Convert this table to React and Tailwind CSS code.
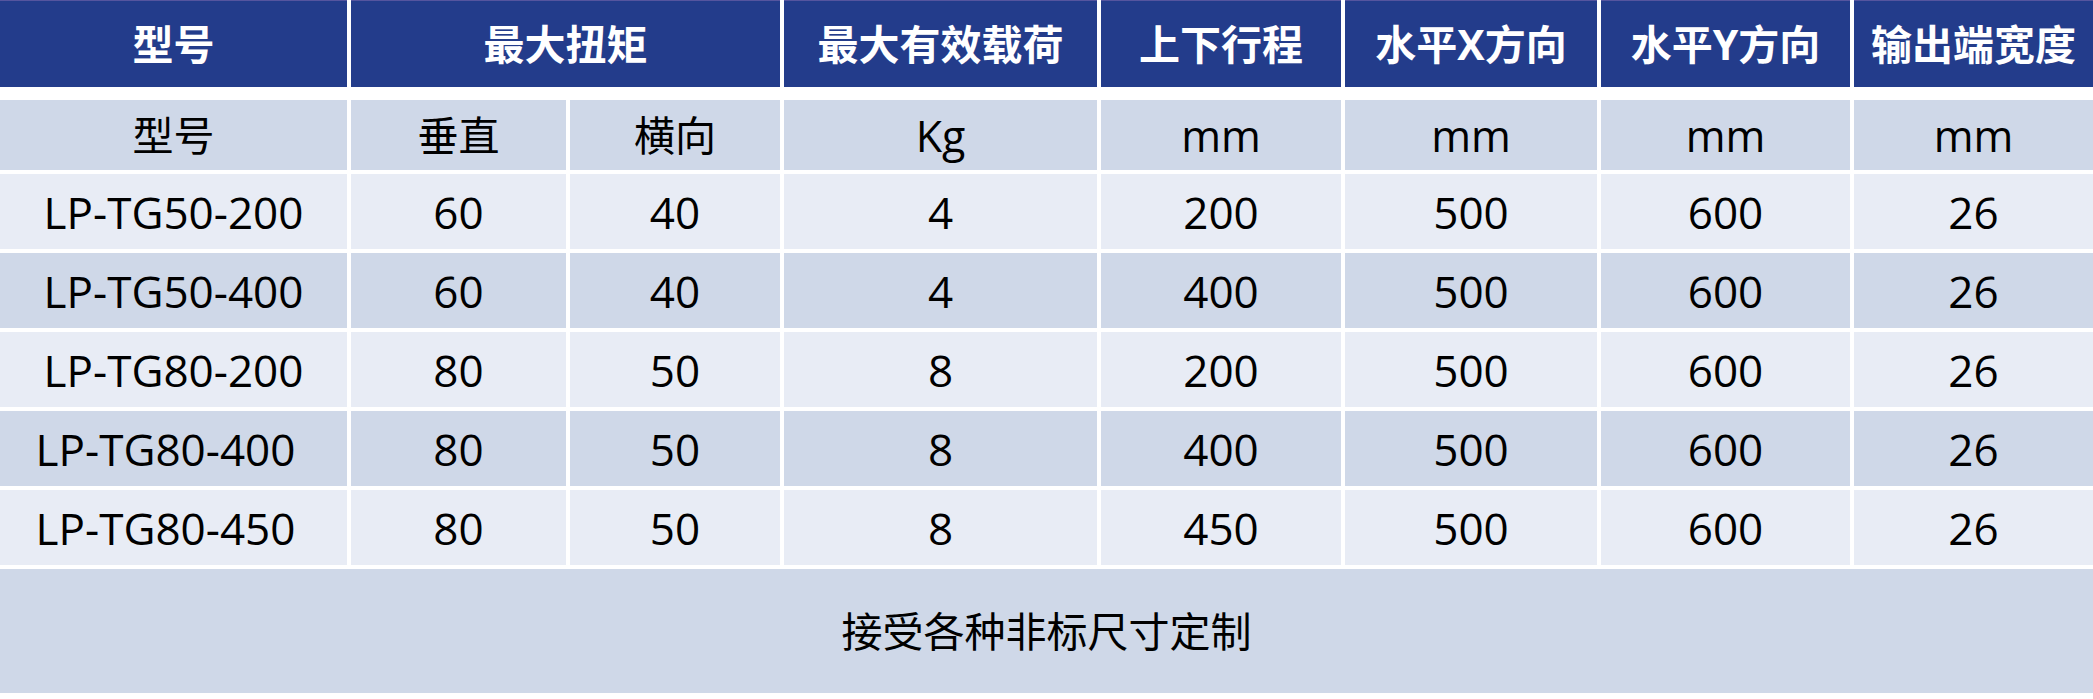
import React from 'react';

const cols = 'grid grid-cols-[347px_215px_210px_313px_240px_252px_249px_239px] gap-x-[4px]';

const rows = [
  { model: 'LP-TG50-200', v: '60', h: '40', load: '4', z: '200', x: '500', y: '600', w: '26' },
  { model: 'LP-TG50-400', v: '60', h: '40', load: '4', z: '400', x: '500', y: '600', w: '26' },
  { model: 'LP-TG80-200', v: '80', h: '50', load: '8', z: '200', x: '500', y: '600', w: '26' },
  { model: 'LP-TG80-400', v: '80', h: '50', load: '8', z: '400', x: '500', y: '600', w: '26', shift: true },
  { model: 'LP-TG80-450', v: '80', h: '50', load: '8', z: '450', x: '500', y: '600', w: '26', shift: true },
];

const Cell = ({ children, className = '' }) => (
  <div className={`flex items-center justify-center ${className}`}>{children}</div>
);

export default function App() {
  return (
    <div className="w-[2093px] h-[699px] bg-white text-black text-[41px] leading-none font-['Open_Sans','Noto_Sans_CJK_SC',sans-serif]">
      {/* header */}
      <div className={`${cols} h-[87px]`}>
        {['型号', '最大扭矩', '最大有效载荷', '上下行程', '水平X方向', '水平Y方向', '输出端宽度'].map((t, i) => (
          <Cell
            key={t}
            className={`bg-[#233c8b] border-t border-[#55559f] text-white font-bold ${i === 1 ? 'col-span-2' : ''}`}
          >
            {t}
          </Cell>
        ))}
      </div>

      {/* units */}
      <div className={`${cols} h-[70px] mt-[13px]`}>
        {['型号', '垂直', '横向', 'Kg', 'mm', 'mm', 'mm', 'mm'].map((t, i) => (
          <Cell key={i} className={`bg-[#cfd8e8] ${i > 2 ? 'text-[43px]' : ''}`}>{t}</Cell>
        ))}
      </div>

      {rows.map((r, idx) => (
        <div key={r.model} className={`${cols} h-[75px] mt-[4px] text-[44px]`}>
          {[r.model, r.v, r.h, r.load, r.z, r.x, r.y, r.w].map((t, i) => (
            <Cell
              key={i}
              className={`${idx % 2 === 0 ? 'bg-[#e8ecf5]' : 'bg-[#cfd8e8]'} ${i === 0 && r.shift ? 'pr-[16px]' : ''}`}
            >
              {t}
            </Cell>
          ))}
        </div>
      ))}

      {/* footer */}
      <div className="h-[124px] mt-[4px] bg-[#cfd8e8] flex items-center justify-center">
        接受各种非标尺寸定制
      </div>
    </div>
  );
}
